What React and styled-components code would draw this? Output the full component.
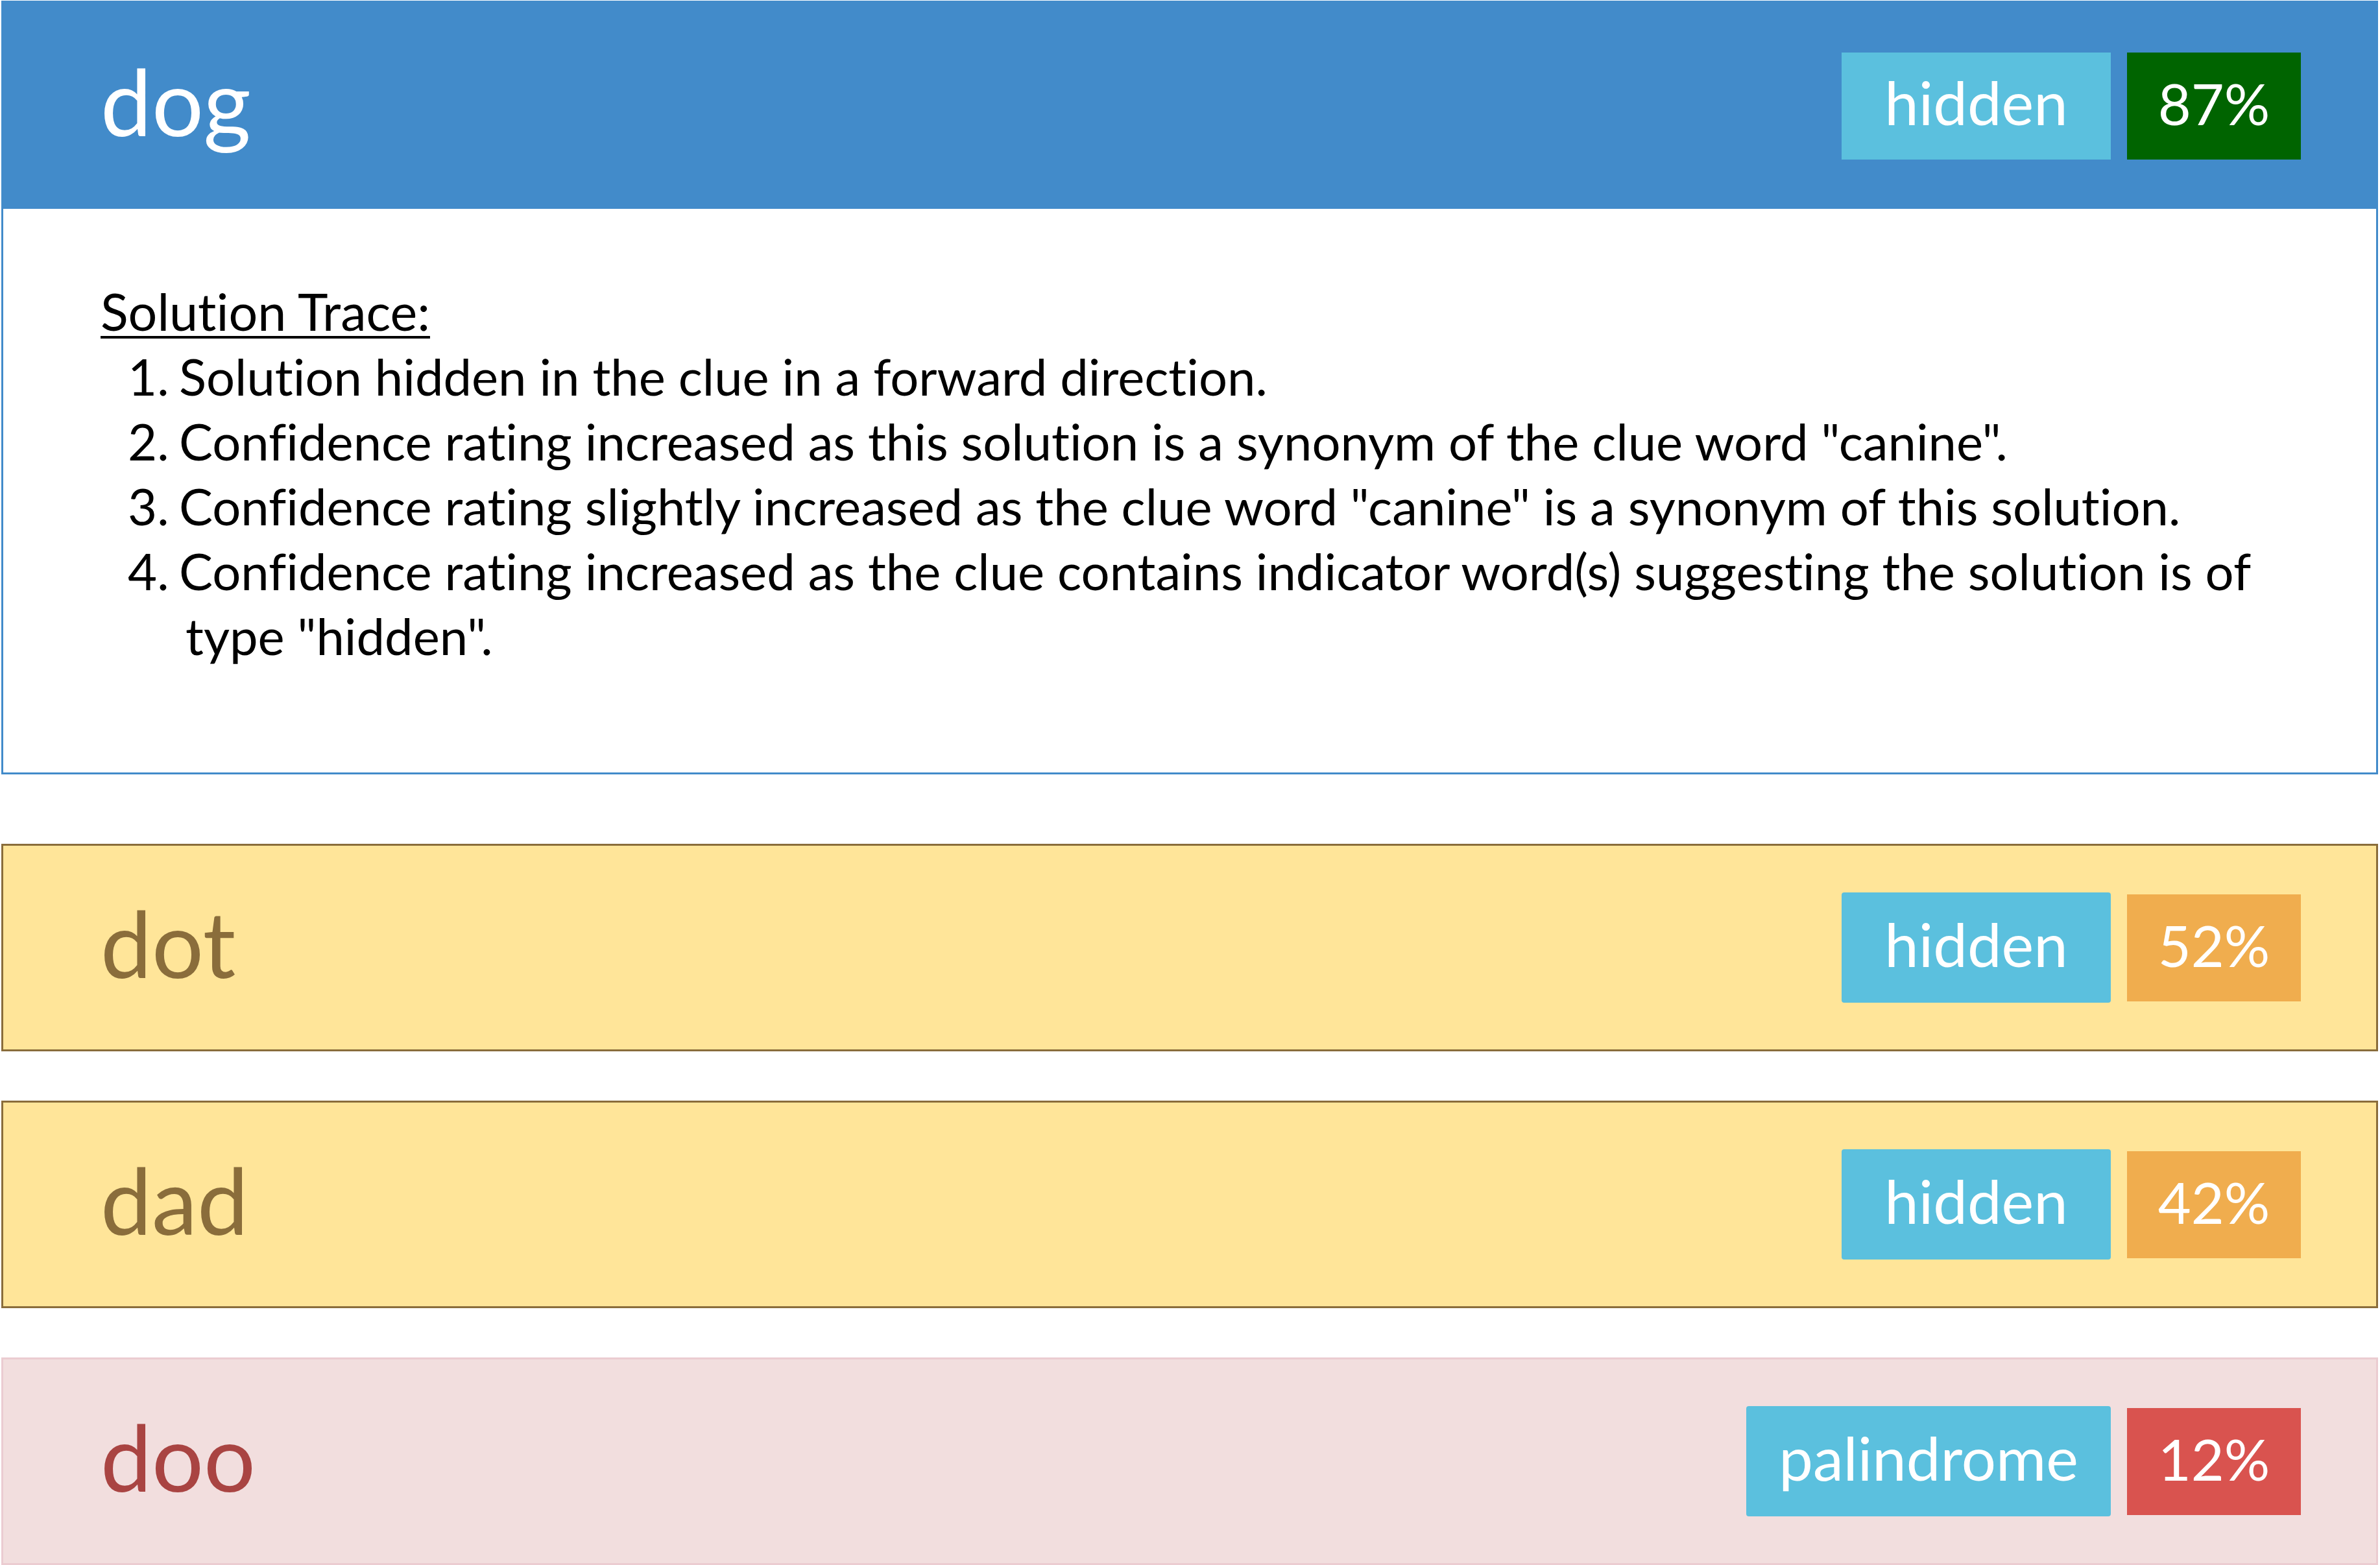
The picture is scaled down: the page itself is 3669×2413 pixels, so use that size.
import styled, { createGlobalStyle } from "styled-components";

const GlobalStyle = createGlobalStyle`
  html, body {
    margin: 0;
    padding: 0;
    background: #fff;
  }
  body {
    font-family: Lato, "Open Sans", sans-serif;
    font-variant-ligatures: no-common-ligatures;
  }
`;

const Page = styled.div`
  display: flex;
  flex-direction: column;
  gap: 76px;
  padding: 1px 3px 0 2px;
`;

const MainPanel = styled.section`
  border: 3px solid #428bca;
  margin-bottom: 31px;
`;

const Header = styled.div`
  display: flex;
  align-items: center;
  justify-content: space-between;
  height: 318px;
  margin: -3px -3px 0;
  padding: 3px 119px 0 153px;
  background: #428bca;
`;

const Row = styled.div`
  display: flex;
  align-items: center;
  justify-content: space-between;
  box-sizing: border-box;
  height: 320px;
  padding: 0 116px 0 150px;
  background: ${(p) => p.$bg};
  border: 3px solid ${(p) => p.$border};
`;

const Word = styled.h2`
  margin: 0;
  padding-bottom: 16px;
  font-size: 141px;
  font-weight: 400;
  line-height: 1;
  color: ${(p) => p.$color};
`;

const Badges = styled.div`
  display: flex;
  align-items: center;
  gap: 25px;
`;

const Badge = styled.span`
  display: flex;
  align-items: center;
  justify-content: center;
  box-sizing: border-box;
  height: 165px;
  padding-bottom: 9px;
  font-size: 88px;
  line-height: 1;
  color: #fff;
`;

const TypeBadge = styled(Badge)`
  min-width: 415px;
  padding: 0 50px 13px;
  font-size: 94px;
  background: #5bc0de;
  ${(p) => p.$tall && "height: 170px; border-radius: 4px;"}
`;

const ScoreBadge = styled(Badge)`
  width: 268px;
  background: ${(p) => p.$bg};
`;

const Body = styled.div`
  padding: 108px 100px 161px 150px;
  font-size: 77.8px;
  line-height: 100px;
  color: #000;
`;

const TraceTitle = styled.div`
  font-size: 79px;
  text-decoration: underline;
  text-decoration-thickness: 4px;
  text-underline-offset: 8px;
`;

const TraceList = styled.ol`
  list-style: none;
  margin: 0;
  padding: 0 0 0 42px;
`;

const TraceItem = styled.li`
  display: grid;
  grid-template-columns: 89px 1fr;
`;

const TraceText = styled.span`
  text-indent: -10px;
`;

const trace = [
  "Solution hidden in the clue in a forward direction.",
  'Confidence rating increased as this solution is a synonym of the clue word "canine".',
  'Confidence rating slightly increased as the clue word "canine" is a synonym of this solution.',
  'Confidence rating increased as the clue contains indicator word(s) suggesting the solution is of type "hidden".',
];

const others = [
  { word: "dot", type: "hidden", score: "52%", tone: "warning" },
  { word: "dad", type: "hidden", score: "42%", tone: "warning" },
  { word: "doo", type: "palindrome", score: "12%", tone: "danger" },
];

const tones = {
  warning: { bg: "#ffe599", border: "#8a6d3b", text: "#8a6d3b", badge: "#f0ad4e" },
  danger: { bg: "#f2dede", border: "#ebccd1", text: "#a94442", badge: "#d9534f" },
};

const App = () => (
  <>
    <GlobalStyle />
    <Page>
      <MainPanel>
        <Header>
          <Word $color="#fff">dog</Word>
          <Badges>
            <TypeBadge>hidden</TypeBadge>
            <ScoreBadge $bg="#006400">87%</ScoreBadge>
          </Badges>
        </Header>
        <Body>
          <TraceTitle>Solution Trace:</TraceTitle>
          <TraceList>
            {trace.map((line, i) => (
              <TraceItem key={i}>
                <span>{i + 1}.</span>
                <TraceText>{line}</TraceText>
              </TraceItem>
            ))}
          </TraceList>
        </Body>
      </MainPanel>
      {others.map(({ word, type, score, tone }) => {
        const t = tones[tone];
        return (
          <Row key={word} $bg={t.bg} $border={t.border}>
            <Word $color={t.text}>{word}</Word>
            <Badges>
              <TypeBadge $tall>{type}</TypeBadge>
              <ScoreBadge $bg={t.badge}>{score}</ScoreBadge>
            </Badges>
          </Row>
        );
      })}
    </Page>
  </>
);

export default App;
